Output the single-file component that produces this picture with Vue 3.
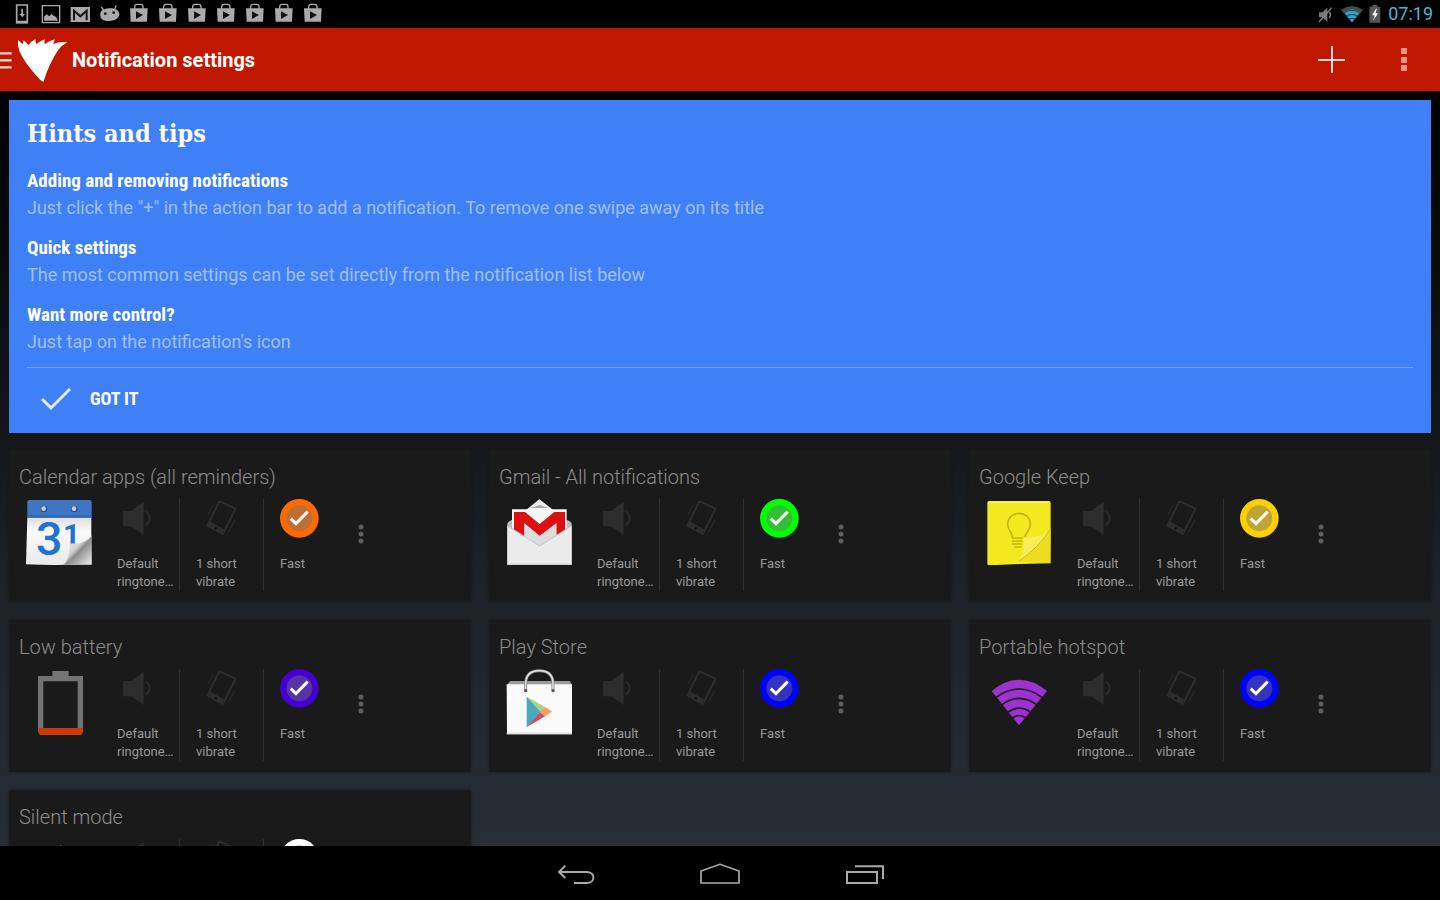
<template>
  <div class="screen">
    <div class="status-bar">
      <div class="status-icons">
        <svg class="status-icon" viewBox="22 0 87 84">
          <path d="M48 15h32v53H48z" fill="none" stroke="#aaa" stroke-width="5" />
          <path d="M46 62h36v8H46zM62 26h5v16h6l-8 10-9-10h6z" fill="#aaa" />
        </svg>
        <svg class="status-icon" viewBox="110 0 87 84">
          <path d="M126 17h52v51h-52z" fill="none" stroke="#aaa" stroke-width="4" />
          <path d="M131 62V50l8-7 8 6 6-7 8 6 6 2 6 12z" fill="#aaa" />
        </svg>
        <svg class="status-icon" viewBox="197 0 87 84">
          <path d="M211 21h58v45h-58z" fill="#aaa" />
          <path d="M221 61V32l19 17 19-17v29" fill="none" stroke="#161616" stroke-width="6" />
        </svg>
        <svg class="status-icon" viewBox="284 0 87 84">
          <path d="M300 47c-2-14 8-21 26-22 19-1 30 6 31 17 0 13-13 20-29 21-17 1-27-5-28-16z" fill="#aaa" />
          <path d="M304 22l8 11M347 18l-5 12" stroke="#aaa" stroke-width="4" stroke-linecap="round" />
          <circle cx="315" cy="41" r="4" fill="#111" />
          <circle cx="340" cy="38" r="4" fill="#111" />
        </svg>
        <svg v-for="n in 7" :key="n" class="status-icon" viewBox="370 0 87 84">
          <path d="M388 25h53l-2 40h-49z" fill="#aaa" />
          <path d="M402 27v-6c0-4 3-8 7-8h11c4 0 7 4 7 8v6" fill="none" stroke="#aaa" stroke-width="4" />
          <path d="M406 34l21 11-21 12z" fill="#111" />
        </svg>
      </div>
      <div class="status-system">
        <svg class="sys-mute" viewBox="105 0 78 84">
          <path d="M117 37h10l15-14v43l-15-14h-10z" fill="#777" />
          <path d="M148 36q6 8 0 18M117 66l38-43" fill="none" stroke="#888" stroke-width="4" />
        </svg>
        <svg class="sys-wifi" viewBox="183 0 75 84">
          <path d="M183 29q33-22 66 0l-33 39z" fill="#444b4e" />
          <path d="M192 36q24-16 48 0l-24 31z" fill="#36a3cc" />
          <path d="M191 39q25-16 50 0M199 49q17-11 34 0M207 58q9-6 18 0" fill="none" stroke="#123542" stroke-width="3" />
        </svg>
        <svg class="sys-battery" viewBox="258 0 66 84">
          <path d="M268 20h9v-5h15v5h9v48h-33z" fill="#555" />
          <path d="M288 26l-12 20h8l-5 16 15-22h-8l5-14z" fill="#fff" />
        </svg>
        <span class="clock">07:19</span>
      </div>
    </div>

    <header class="action-bar">
      <button class="up-button" aria-label="Open navigation">
        <svg viewBox="0 84 210 189">
          <path d="M0 160h35M0 181h35M0 202h35" stroke="#ffd9d4" stroke-width="7" />
          <path
            d="M54 119Q60 126 68 133Q68 127 71 121Q78 127 86 135Q93 124 106 117Q106 126 110 132Q119 123 135 118Q132 127 134 133Q146 122 165 118Q161 125 160 132Q180 124 202 127Q184 136 174 151Q148 190 130 246Q122 242 112 230Q74 188 59 155Q52 138 54 119z"
            fill="#fff"
          />
        </svg>
      </button>
      <h1 class="app-title">Notification settings</h1>
      <button class="action-button" aria-label="Add notification">
        <svg viewBox="0 0 72 63">
          <path d="M22 32h27M36 18v27" stroke="#ffd9d4" stroke-width="2" />
        </svg>
      </button>
      <button class="action-button" aria-label="More options">
        <svg viewBox="0 0 72 63">
          <path d="M33 20h6v6h-6zM33 29h6v6h-6zM33 37h6v6h-6z" fill="#f08f88" />
        </svg>
      </button>
    </header>

    <main class="content">
      <section class="hints">
        <h2 class="hints-title">Hints and tips</h2>
        <div v-for="hint in hints" :key="hint.title" class="hint">
          <h3 class="hint-title">{{ hint.title }}</h3>
          <p class="hint-text">{{ hint.text }}</p>
        </div>
        <button class="got-it">
          <svg class="got-it-icon" viewBox="0 0 30 24">
            <path d="M1 12l9 9L29 2" fill="none" stroke="#e4eeff" stroke-width="3" />
          </svg>
          <span>GOT IT</span>
        </button>
      </section>

      <section class="card-grid">
        <article v-for="item in notifications" :key="item.name" class="card">
          <h2 class="card-title">{{ item.name }}</h2>
          <div class="card-row">
            <button class="app-icon" :aria-label="item.name + ' settings'">
              <!-- calendar -->
              <svg v-if="item.icon === 'calendar'" viewBox="78 147 198 198">
                <defs>
                  <linearGradient id="calPage" x1="0" y1="0" x2="0" y2="1">
                    <stop offset="0" stop-color="#dcdcdc" />
                    <stop offset="0.3" stop-color="#fafafa" />
                    <stop offset="1" stop-color="#e9e9e9" />
                  </linearGradient>
                  <linearGradient id="calCurl" x1="0" y1="0" x2="1" y2="1">
                    <stop offset="0" stop-color="#fff" />
                    <stop offset="0.45" stop-color="#d0d0d0" />
                    <stop offset="0.55" stop-color="#8c8c8c" />
                    <stop offset="1" stop-color="#eee" />
                  </linearGradient>
                </defs>
                <path d="M82 200h192v142q-100 5-196 1z" fill="url(#calPage)" />
                <path d="M82 203v-46q0-7 7-7h180q6 0 6 7v46z" fill="#3f76c4" />
                <path d="M82 196h193v7H82z" fill="#3468b4" />
                <text x="108" y="316" class="cal-day">3<tspan x="189" y="284" class="cal-day-unit">1</tspan></text>
                <path d="M275 256v88h-86q17-11 19-44 0-16 8-20 40 4 59-24z" fill="url(#calCurl)" />
                <circle cx="132" cy="177" r="10" fill="#28528f" />
                <circle cx="223" cy="177" r="10" fill="#28528f" />
                <circle cx="131" cy="176" r="7" fill="#c9ccd1" />
                <circle cx="222" cy="176" r="7" fill="#c9ccd1" />
              </svg>

              <!-- gmail -->
              <svg v-else-if="item.icon === 'gmail'" viewBox="78 147 198 198">
                <path d="M82 222q0-6 13-12h165q15 4 15 12v122H82z" fill="#bdbdbd" />
                <path d="M138 180l40-32 42 32z" fill="#eee" />
                <path d="M152 174l27-9 27 9z" fill="#aaa" />
                <path d="M96 178h164v70l-82 44-82-44z" fill="#f6f6f6" />
                <path d="M102 186h33l44 36 44-36h32v60l-26 16v-42l-50 38-46-38v42l-31-18z" fill="#dc1010" />
                <path d="M133 220l46 38 50-38v36l-50 32-46-32z" fill="#dcdcdc" />
                <path d="M82 227l97 61 96-61v117H82z" fill="#ececec" />
                <path d="M82 227l97 61 96-61" fill="none" stroke="#c4c4c4" stroke-width="3" />
                <path d="M82 341h193v3H82z" fill="#ccc" />
              </svg>

              <!-- keep -->
              <svg v-else-if="item.icon === 'keep'" viewBox="78 147 198 198">
                <path d="M82 158q0-5 5-5h179q6 0 6 5v80l-2 102-92 2-90 4q-6 0-6-5z" fill="#f4e81e" />
                <path d="M84 155h186v3H84z" fill="#fff48a" />
                <path
                  d="M158 264c0-18-15-20-15-41 0-19 15-33 34-33s34 14 34 33c0 21-16 23-16 41z"
                  fill="none" stroke="#c5b510" stroke-width="5"
                />
                <path d="M156 273h31M156 282h30M163 291h22" fill="none" stroke="#c5b510" stroke-width="5" />
                <path d="M272 236v104l-96-6z" fill="#eedc20" />
                <path d="M272 236q-24 30-84 26 10 28-12 74 60-42 96-100z" fill="#f7ed5c" />
                <path d="M272 236q-36 58-96 98" fill="none" stroke="#d0bb18" stroke-width="3" />
              </svg>

              <!-- low battery -->
              <svg v-else-if="item.icon === 'battery'" viewBox="78 177 198 198">
                <path d="M114 198h43v-15h49v15h43v157h-16V214H130v141h-16z" fill="#737373" />
                <path d="M114 354h135v12l-6 9H120l-6-9z" fill="#cc3a06" />
              </svg>

              <!-- play store -->
              <svg v-else-if="item.icon === 'play'" viewBox="78 177 198 198">
                <path d="M90 213h180l5 12H82z" fill="#9a9a9a" />
                <path d="M80 223h198l-2 150H81z" fill="#fafafa" />
                <path d="M80 368h197v5H80z" fill="#ddd" />
                <path d="M137 240v-18q0-40 41-40t41 40v18" fill="none" stroke="#777" stroke-width="9" />
                <path d="M137 240v-18q0-40 41-40t41 40v18" fill="none" stroke="#ddd" stroke-width="5" />
                <circle cx="137" cy="242" r="5" fill="#555" />
                <circle cx="219" cy="242" r="5" fill="#555" />
                <path d="M140 260v92l50-47z" fill="#4aa9bd" />
                <path d="M140 260l55 31-13 16z" fill="#a9d389" />
                <path d="M195 291l22 14-24 15-15-14z" fill="#f3a261" />
                <path d="M140 352l40-44 15 11z" fill="#d54a62" />
              </svg>

              <!-- hotspot -->
              <svg v-else-if="item.icon === 'hotspot'" viewBox="78 177 198 198">
                <path d="M95 243q82-67 166 0l-84 103z" fill="#9c32cf" />
                <path
                  d="M108 262q70-50 138 0M126 284q52-38 104 0M144 306q34-24 67 0M158 323q20-13 38 0"
                  fill="none" stroke="#1a1a1a" stroke-width="5"
                />
              </svg>

              <!-- silent mode -->
              <svg v-else viewBox="0 0 66 66">
                <path d="M14 24h12l9-19v52l-9-15H14z" fill="#666" />
                <path d="M42 24l14 16M56 24L42 40" stroke="#666" stroke-width="4" />
              </svg>
            </button>

            <button class="setting sound">
              <svg class="setting-icon" viewBox="351 147 120 120">
                <path d="M369 183h24l38-27v99l-38-26h-24z" fill="#2d2d2d" />
                <path d="M437 183q24 22 0 42" fill="none" stroke="#2d2d2d" stroke-width="5" />
              </svg>
              <span>Default</span>
              <span>ringtone…</span>
            </button>
            <button class="setting vibrate">
              <svg class="setting-icon" viewBox="583 147 120 120">
                <g fill="none" stroke="#2d2d2d">
                  <path d="M653 154l49 22-39 76-46-26z" stroke-width="6" stroke-linejoin="round" />
                  <path d="M620 220l44 24" stroke-width="15" />
                  <path d="M635 164l-17 29M700 211l-20 35" stroke-width="3" />
                </g>
                <circle cx="642" cy="235" r="4" fill="#151515" />
              </svg>
              <span>1 short</span>
              <span>vibrate</span>
            </button>
            <button class="setting light">
              <svg class="setting-icon" viewBox="840 147 120 120">
                <circle cx="898" cy="205" r="58" :fill="item.color" />
                <circle cx="898" cy="205" r="39" fill="#717171" fill-opacity="0.45" />
                <path d="M872 206l16 15 35-36" fill="none" stroke="#fff" stroke-width="9" />
              </svg>
              <span>Fast</span>
            </button>
            <button class="card-menu" :aria-label="item.name + ' menu'">
              <svg viewBox="0 0 26 70">
                <circle v-for="y in [28, 35, 42]" :key="y" cx="13" :cy="y" r="2.5" fill="#5e5e5e" />
              </svg>
            </button>
          </div>
        </article>
      </section>
    </main>

    <nav class="nav-bar">
      <button class="nav-button" aria-label="Back">
        <svg viewBox="96 18 144 162">
          <path d="M136 77l-19 19 19 18M118 96h82c27 0 27 33 0 33h-38" fill="none" stroke="#aaa" stroke-width="6" />
        </svg>
      </button>
      <button class="nav-button" aria-label="Home">
        <svg viewBox="528 18 144 162">
          <path d="M543 129V93l57-20 57 20v36z" fill="none" stroke="#aaa" stroke-width="5" />
        </svg>
      </button>
      <button class="nav-button" aria-label="Recent apps">
        <svg viewBox="960 18 144 162">
          <path d="M981 96h90v33h-90zM1005 79h84v38" fill="none" stroke="#aaa" stroke-width="6" />
        </svg>
      </button>
    </nav>
  </div>
</template>

<script setup>
import { ref } from 'vue';

const hints = [
  {
    title: 'Adding and removing notifications',
    text: 'Just click the "+" in the action bar to add a notification. To remove one swipe away on its title'
  },
  {
    title: 'Quick settings',
    text: 'The most common settings can be set directly from the notification list below'
  },
  {
    title: 'Want more control?',
    text: "Just tap on the notification's icon"
  }
];

const notifications = ref([
  { name: 'Calendar apps (all reminders)', icon: 'calendar', color: '#ff6a00' },
  { name: 'Gmail - All notifications', icon: 'gmail', color: '#00ff00' },
  { name: 'Google Keep', icon: 'keep', color: '#ffd000' },
  { name: 'Low battery', icon: 'battery', color: '#4400d0' },
  { name: 'Play Store', icon: 'play', color: '#0000ff' },
  { name: 'Portable hotspot', icon: 'hotspot', color: '#0000ff' },
  { name: 'Silent mode', icon: 'silent', color: '#ffffff' }
]);
</script>

<style>
body {
  margin: 0;
  background: #000;
}
</style>

<style scoped>
.screen {
  height: 100vh;
  display: flex;
  flex-direction: column;
  overflow: hidden;
  background: #000;
  color: #fff;
  font-family: Roboto, "Noto Sans", sans-serif;
}

button {
  display: flex;
  padding: 0;
  border: 0;
  background: none;
  color: inherit;
  font: inherit;
  text-align: left;
  cursor: pointer;
}

svg {
  display: block;
}

h1,
h2,
h3,
p {
  margin: 0;
}

/* status bar */
.status-bar {
  flex: 0 0 28px;
  display: flex;
  justify-content: space-between;
  padding: 0 7px 0 8px;
}

.status-icons,
.status-system {
  display: flex;
  align-items: center;
}

.status-icon {
  width: 29px;
  height: 28px;
}

.sys-mute {
  width: 26px;
  height: 28px;
}

.sys-wifi {
  width: 25px;
  height: 28px;
}

.sys-battery {
  width: 22px;
  height: 28px;
}

.clock {
  color: #4db4dc;
  font-size: 18px;
  line-height: 28px;
}

/* action bar */
.action-bar {
  flex: 0 0 63px;
  display: flex;
  align-items: center;
  background: #c01800;
}

.up-button svg {
  width: 70px;
  height: 63px;
}

.app-title {
  flex: 1;
  padding-left: 2px;
  font-size: 20px;
  font-weight: 700;
  line-height: 28px;
}

.action-button svg {
  width: 72px;
  height: 63px;
}

/* scrolling content */
.content {
  flex: 1;
  min-height: 0;
  overflow-y: auto;
  scrollbar-width: none;
  padding: 9px 9px 0;
  background: linear-gradient(#000 0%, #14161a 45%, #1f2328 68%, #282e36 100%);
}

.hints {
  padding: 16px 18px 0;
  background: #4080f6;
}

.hints-title {
  margin-bottom: 15px;
  font-family: "Roboto Slab", "DejaVu Serif Condensed", "DejaVu Serif", serif;
  font-size: 25px;
  line-height: 36px;
}

.hint {
  margin-bottom: 13px;
}

.hint:last-of-type {
  margin-bottom: 12px;
}

.hint-title {
  font-family: "Roboto Condensed", "Liberation Sans Narrow", Roboto, sans-serif;
  font-size: 19px;
  font-weight: 700;
  line-height: 27px;
}

.hint-text {
  color: #9fc1fb;
  font-size: 18px;
  line-height: 27px;
}

.got-it {
  width: 100%;
  height: 66px;
  align-items: center;
  gap: 19px;
  padding: 0 14px 4px;
  border-top: 1px solid #75a5f9;
  font-family: "Roboto Condensed", "Liberation Sans Narrow", Roboto, sans-serif;
  font-size: 18px;
  font-weight: 700;
}

.got-it-icon {
  width: 30px;
  height: 24px;
}

/* notification cards */
.card-grid {
  display: grid;
  grid-template-columns: repeat(3, 1fr);
  gap: 18px;
  margin-top: 17px;
}

.card {
  padding: 13px 10px 11px;
  background: #1a1a1a;
  box-shadow: 0 0 2px #15171a;
}

.card-title {
  margin-bottom: 8px;
  color: #8c8c8c;
  font-size: 20px;
  font-weight: 300;
  line-height: 28px;
}

.card-row {
  display: flex;
  align-items: flex-start;
  height: 92px;
  padding-left: 7px;
}

.app-icon {
  margin-right: 25px;
}

.app-icon svg {
  width: 66px;
  height: 66px;
}

.cal-day {
  fill: #2272cf;
  font-size: 140px;
  font-weight: 500;
}

.cal-day-unit {
  font-size: 90px;
  font-weight: 700;
}

.setting {
  flex-direction: column;
  height: 92px;
  color: #999;
  font-size: 13px;
  line-height: 18px;
}

.setting-icon {
  width: 40px;
  height: 40px;
  margin-bottom: 16px;
}

.sound {
  width: 63px;
  border-right: 1px solid #303030;
}

.vibrate {
  width: 84px;
  padding-left: 16px;
  border-right: 1px solid #303030;
}

.light {
  width: 84px;
  padding-left: 16px;
}

.card-menu svg {
  width: 26px;
  height: 70px;
}

/* system navigation */
.nav-bar {
  flex: 0 0 54px;
  display: flex;
  justify-content: center;
  background: #000;
}

.nav-button {
  width: 144px;
  justify-content: center;
}

.nav-button svg {
  width: 48px;
  height: 54px;
}
</style>
